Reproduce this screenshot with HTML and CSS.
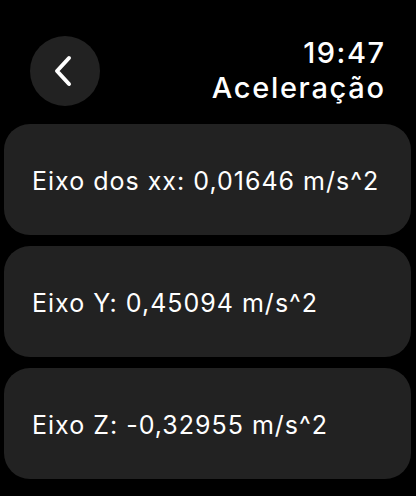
FILE: index.html
```html
<!DOCTYPE html>
<html lang="pt">
<head>
<meta charset="utf-8">
<link rel="stylesheet" href="styles.css">
</head>
<body>
<div class="screen">
  <header class="header">
    <button class="back" aria-label="Voltar">
      <svg width="20" height="32" viewBox="0 0 20 32"><path d="M16 3 L4 16 L16 29" fill="none" stroke="#fff" stroke-width="4" stroke-linecap="round" stroke-linejoin="round"/></svg>
    </button>
    <div class="titles">
      <div class="time">19:47</div>
      <div class="title">Aceleração</div>
    </div>
  </header>
  <main class="list">
    <div class="card">Eixo dos xx: 0,01646 m/s^2</div>
    <div class="card">Eixo Y: 0,45094 m/s^2</div>
    <div class="card">Eixo Z: -0,32955 m/s^2</div>
  </main>
</div>
</body>
</html>
```
FILE: styles.css
```css
html, body {
  margin: 0;
  padding: 0;
  background: #000;
}
.screen {
  width: 416px;
  height: 496px;
  color: #fff;
  font-family: Inter, "Noto Sans", sans-serif;
  box-sizing: border-box;
  padding-top: 36px;
}
.header {
  display: flex;
  justify-content: space-between;
  align-items: flex-start;
  padding: 0 32px 0 30px;
  height: 88px;
}
.back {
  width: 70px;
  height: 70px;
  border-radius: 50%;
  background: #222222;
  border: none;
  padding: 0 4px 0 0;
  display: flex;
  align-items: center;
  justify-content: center;
}
.titles {
  display: flex;
  flex-direction: column;
  align-items: flex-end;
}
.time {
  font-size: 29px;
  font-weight: 500;
  line-height: 34px;
  letter-spacing: 1.5px;
  margin-right: -1.5px;
}
.title {
  font-size: 29px;
  font-weight: 500;
  line-height: 36px;
  letter-spacing: 1.7px;
  margin-right: -1.7px;
}
.list {
  display: flex;
  flex-direction: column;
  gap: 11px;
  padding: 0 5px 0 4px;
}
.card {
  height: 111px;
  border-radius: 26px;
  background: #222222;
  display: flex;
  align-items: center;
  padding-left: 28px;
  font-size: 25px;
  font-weight: 400;
  letter-spacing: 1px;
  padding-top: 2px;
  box-sizing: border-box;
}
```
